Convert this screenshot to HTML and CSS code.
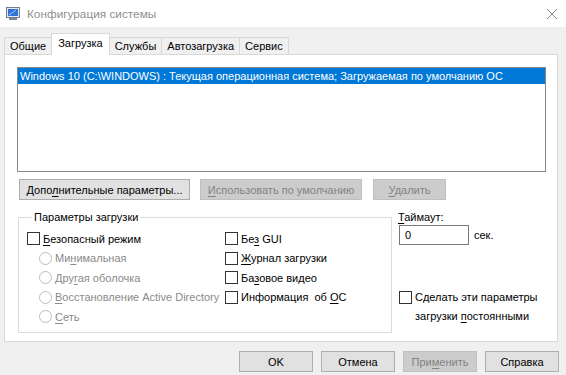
FILE: index.html
```html
<!DOCTYPE html>
<html lang="ru">
<head>
    <meta charset="UTF-8">
    <title>Конфигурация системы</title>
    <link rel="stylesheet" href="styles.css">
</head>
<body>

    <!-- Title bar -->
    <div class="titlebar">
        <svg class="app-icon" viewBox="0 0 14 13">
            <rect x="0.5" y="0.5" width="13" height="10" fill="#e3e7ee" stroke="#6f7d93"/>
            <rect x="2" y="2" width="10" height="7" fill="#2f72d8"/>
            <path d="M3 8 L10 3" stroke="#a8ccff" stroke-width="1"/>
            <rect x="3" y="11" width="8" height="2" fill="#7d8798"/>
        </svg>
        <span class="title">Конфигурация системы</span>
        <svg class="close" viewBox="0 0 10 10">
            <path d="M0 0 L10 10 M10 0 L0 10" stroke="#8c8c8c" stroke-width="1"/>
        </svg>
    </div>

    <!-- Tabs -->
    <div class="tabs">
        <div class="tab">Общие</div>
        <div class="tab active">Загрузка</div>
        <div class="tab">Службы</div>
        <div class="tab">Автозагрузка</div>
        <div class="tab">Сервис</div>
    </div>

    <div class="panel">
        <div class="os-list">
            <div class="os-item selected">Windows 10 (C:\WINDOWS) : Текущая операционная система; Загружаемая по умолчанию ОС</div>
        </div>

        <div class="list-buttons">
            <button class="btn advanced">Допо<u>л</u>нительные параметры...</button>
            <button class="btn default-btn" disabled><u>И</u>спользовать по умолчанию</button>
            <button class="btn delete-btn" disabled><u>У</u>далить</button>
        </div>

        <div class="boot-area">
            <fieldset class="boot-options">
                <legend>Параметры загрузки</legend>
                <div class="opt-cols">
                    <div class="opt-col first">
                        <div class="opt"><span class="box"></span><span><u>Б</u>езопасный режим</span></div>
                        <div class="opt radio disabled"><span class="dot"></span><span>Ми<u>н</u>имальная</span></div>
                        <div class="opt radio disabled"><span class="dot"></span><span>Дру<u>г</u>ая оболочка</span></div>
                        <div class="opt radio disabled"><span class="dot"></span><span><u>В</u>осстановление Active Directory</span></div>
                        <div class="opt radio disabled"><span class="dot"></span><span><u>С</u>еть</span></div>
                    </div>
                    <div class="opt-col">
                        <div class="opt"><span class="box"></span><span>Бе<u>з</u> GUI</span></div>
                        <div class="opt"><span class="box"></span><span><u>Ж</u>урнал загрузки</span></div>
                        <div class="opt"><span class="box"></span><span>Ба<u>з</u>овое видео</span></div>
                        <div class="opt"><span class="box"></span><span>Информация&nbsp; об <u>О</u>С</span></div>
                    </div>
                </div>
            </fieldset>

            <div class="timeout">
                <div class="timeout-label"><u>Т</u>аймаут:</div>
                <div class="timeout-row">
                    <span class="field">0</span>
                    <span class="unit">сек.</span>
                </div>
                <div class="permanent">
                    <span class="box"></span>
                    <span>Сделать эти параметры<br>загрузки <u>п</u>остоянными</span>
                </div>
            </div>
        </div>
    </div>

    <!-- Dialog buttons -->
    <div class="footer">
        <button class="btn">OK</button>
        <button class="btn">Отмена</button>
        <button class="btn" disabled>При<u>м</u>енить</button>
        <button class="btn">Справка</button>
    </div>

</body>
</html>
```

FILE: styles.css
```css
* {
    margin: 0;
    padding: 0;
    box-sizing: border-box;
}

html, body {
    height: 100%;
}

body {
    font-family: 'Liberation Sans', Arial, sans-serif;
    font-size: 11px;
    color: #000;
    background-color: #f0f0f0;
    overflow: hidden;
}

u {
    text-decoration: underline;
    text-underline-offset: 2px;
}

/* Title bar */
.titlebar {
    height: 27px;
    background-color: #fff;
    display: flex;
    align-items: center;
    padding: 0 9px 0 6px;
}

.app-icon {
    width: 14px;
    height: 13px;
    margin-right: 7px;
}

.title {
    flex: 1;
    font-size: 11.8px;
    color: #8f8f8f;
}

.close {
    width: 10px;
    height: 10px;
}

/* Tabs */
.tabs {
    display: flex;
    align-items: flex-end;
    height: 27px;
    padding-left: 5px;
}

.tab {
    height: 17px;
    line-height: 16px;
    padding: 0 5px;
    border: 1px solid #d9d9d9;
    border-bottom: none;
    margin-left: -1px;
    background-color: #f0f0f0;
}

.tab.active {
    height: 22px;
    line-height: 18px;
    margin-bottom: -1px;
    padding: 0 6px;
    background-color: #fff;
    position: relative;
    z-index: 1;
}

.panel {
    height: 288px;
    margin: 0 8px 0 4px;
    padding: 12px 11px 0 12px;
    background-color: #fff;
    border: 1px solid #d9d9d9;
}

/* OS list */
.os-list {
    height: 105px;
    border: 1px solid #828790;
    background-color: #fff;
}

.os-item {
    height: 16px;
    line-height: 16px;
    padding-left: 2px;
    white-space: nowrap;
}

.os-item.selected {
    background-color: #0078d7;
    color: #fff;
}

/* Buttons */
.btn {
    height: 21px;
    font-family: inherit;
    font-size: 11px;
    color: #000;
    background-color: #e1e1e1;
    border: 1px solid #adadad;
    white-space: nowrap;
}

.btn:disabled {
    color: #838383;
    background-color: #cccccc;
    border-color: #bfbfbf;
}

.list-buttons {
    display: flex;
    gap: 10px;
    margin-top: 7px;
    padding-left: 2px;
}

.advanced { width: 171px; }
.default-btn { width: 162px; }
.delete-btn { width: 73px; margin-left: 1px; }

/* Boot options */
.boot-area {
    display: flex;
    margin-top: 9px;
    padding-left: 1px;
}

.boot-options {
    width: 374px;
    height: 124px;
    border: 1px solid #dcdcdc;
    padding: 0 8px;
}

.boot-options legend {
    margin-left: 5px;
    padding: 0 2px;
    line-height: 16px;
}

.opt-cols {
    display: flex;
    margin-top: 4px;
}

.opt-col.first {
    width: 198px;
}

.opt {
    display: flex;
    align-items: center;
    height: 19.5px;
    white-space: nowrap;
}

.box {
    width: 13px;
    height: 13px;
    border: 1px solid #333;
    background-color: #fff;
    margin-right: 3px;
    flex-shrink: 0;
}

.opt.radio {
    margin-left: 12px;
}

.dot {
    width: 13px;
    height: 13px;
    border: 1px solid #bcbcbc;
    border-radius: 50%;
    background-color: #fff;
    margin-right: 3px;
    flex-shrink: 0;
}

.opt.disabled {
    color: #8a8a8a;
}

/* Timeout column */
.timeout {
    flex: 1;
    margin-left: 6px;
    white-space: nowrap;
}

.timeout-label {
    line-height: 16px;
}

.timeout-row {
    display: flex;
    align-items: center;
}

.field {
    width: 70px;
    height: 20px;
    line-height: 18px;
    margin-left: 1px;
    padding-left: 5px;
    border: 1px solid #7a7a7a;
}

.unit {
    margin-left: 5px;
}

.permanent {
    display: flex;
    align-items: flex-start;
    margin-top: 43px;
    margin-left: 1px;
    line-height: 19px;
}

.permanent .box {
    margin-top: 3px;
}

/* Footer */
.footer {
    display: flex;
    justify-content: flex-end;
    gap: 8px;
    padding: 9px 7px 0 0;
}

.footer .btn {
    width: 74px;
}
```
